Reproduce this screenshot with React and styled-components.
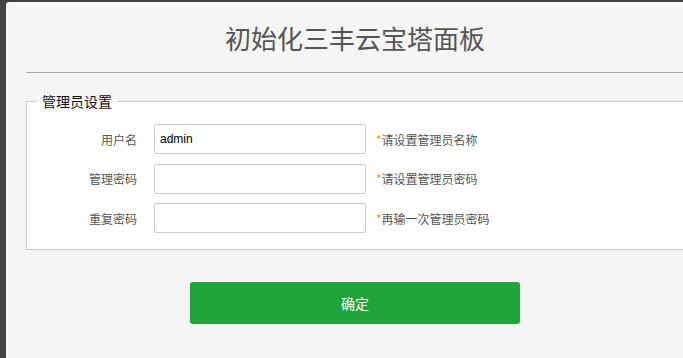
import React from 'react'
import styled, { createGlobalStyle } from 'styled-components'

const GlobalStyle = createGlobalStyle`
  html, body {
    margin: 0;
    padding: 0;
    background: #444;
    overflow: hidden;
  }
  body {
    font-family: "Liberation Sans", "Noto Sans CJK SC", sans-serif;
  }
`

const Panel = styled.div`
  margin: 2px 0 0 6px;
  width: 698px;
  height: 356px;
  box-sizing: border-box;
  padding: 0 20px;
  background: #f5f5f5;
  border-top-left-radius: 3px;
`

const Title = styled.h1`
  margin: 0;
  height: 70px;
  border-bottom: 1px solid #aaa;
  display: flex;
  align-items: center;
  justify-content: center;
  font-family: "Noto Sans CJK SC", sans-serif;
  font-size: 26px;
  font-weight: 400;
  color: #555;
`

const Fieldset = styled.fieldset`
  margin: 19px 0 0;
  padding: 14px 0 16px;
  border: 1px solid #ccc;
  background: #fff;
  display: flex;
  flex-direction: column;
  gap: 9.5px;
`

const Legend = styled.legend`
  margin-left: 10px;
  padding: 0 5px;
  font-family: "Noto Sans CJK SC", sans-serif;
  font-size: 14px;
  color: #111;
  line-height: 18px;
`

const Row = styled.div`
  display: flex;
  align-items: center;
  height: 30px;
`

const Label = styled.label`
  width: 110px;
  margin-right: 17px;
  text-align: right;
  font-family: "Noto Sans CJK SC", sans-serif;
  font-size: 12px;
  color: #555;
`

const Input = styled.input`
  box-sizing: border-box;
  width: 212px;
  height: 30px;
  padding: 0 5px;
  border: 1px solid #ccc;
  border-radius: 2px;
  background: #fff;
  font-family: "Liberation Sans", sans-serif;
  font-size: 12px;
  color: #000;
  outline: none;
`

const Hint = styled.span`
  margin-left: 10px;
  font-family: "Noto Sans CJK SC", sans-serif;
  font-size: 12px;
  color: #555;
`

const Star = styled.i`
  font-style: normal;
  color: #f39800;
`

const Footer = styled.div`
  display: flex;
  justify-content: center;
  padding-top: 32px;
`

const Button = styled.button`
  width: 330px;
  height: 42px;
  border: none;
  border-radius: 3px;
  background: #20a53a;
  color: #fff;
  font-family: "Noto Sans CJK SC", sans-serif;
  font-size: 14px;
  cursor: pointer;
`

const fields = [
  { label: '用户名', value: 'admin', hint: '请设置管理员名称' },
  { label: '管理密码', value: '', hint: '请设置管理员密码', type: 'password' },
  { label: '重复密码', value: '', hint: '再输一次管理员密码', type: 'password' },
]

const App = () => {
  return (
    <>
      <GlobalStyle />
      <Panel>
        <Title>初始化三丰云宝塔面板</Title>
        <Fieldset>
          <Legend>管理员设置</Legend>
          {fields.map((f) => (
            <Row key={f.label}>
              <Label>{f.label}</Label>
              <Input type={f.type || 'text'} defaultValue={f.value} />
              <Hint>
                <Star>*</Star>
                {f.hint}
              </Hint>
            </Row>
          ))}
        </Fieldset>
        <Footer>
          <Button>确定</Button>
        </Footer>
      </Panel>
    </>
  )
}

export default App
